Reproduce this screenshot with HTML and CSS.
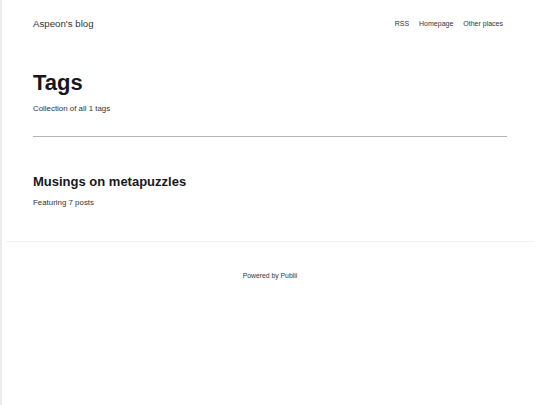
FILE: index.html
```html
<!DOCTYPE html>
<html lang="en">

<head>
    <meta charset="UTF-8">
    <meta name="viewport" content="width=device-width, initial-scale=1.0">
    <title>Tags - Aspeon's blog</title>
    <link rel="stylesheet" href="styles.css">
</head>

<body>
    <div class="page">
        <header class="top">
            <a class="logo" href="#">Aspeon's blog</a>
            <nav class="menu">
                <a href="#">RSS</a>
                <a href="#">Homepage</a>
                <a href="#">Other places</a>
            </nav>
        </header>

        <main class="content">
            <h1>Tags</h1>
            <p class="desc">Collection of all 1 tags</p>
            <hr>
            <article class="tag">
                <h2><a href="#">Musings on metapuzzles</a></h2>
                <p>Featuring 7 posts</p>
            </article>
        </main>

        <footer class="footer">
            <p>Powered by <a href="#">Publii</a></p>
        </footer>
    </div>
</body>

</html>
```

FILE: styles.css
```css
body {
    margin: 0;
    font-family: "Liberation Sans", Arial, sans-serif;
    color: #17181e;
    background: #fff;
}

a {
    color: inherit;
    text-decoration: none;
}

.page {
    min-height: 405px;
    border-left: 2px solid #ececec;
    padding-right: 6px;
    box-sizing: border-box;
}

.top {
    display: flex;
    justify-content: space-between;
    align-items: center;
    padding: 17px 31px 0 31px;
    height: 13px;
    color: #333;
}

.logo {
    font-size: 9.7px;
}

.menu {
    display: flex;
    gap: 10px;
    font-size: 7px;
}

.content {
    padding: 0 27px 0 31px;
}

h1 {
    font-size: 22px;
    margin: 40px 0 0;
    line-height: 26px;
}

.desc {
    font-size: 7.9px;
    margin: 8px 0 0;
    color: #333;
}

hr {
    border: none;
    border-top: 1.5px solid #b4b4b4;
    margin: 23px 0 0;
}

.tag h2 {
    font-size: 13px;
    margin: 37px 0 0;
    line-height: 16px;
}

.tag p {
    font-size: 7.9px;
    margin: 8px 0 0;
    color: #333;
}

.footer {
    margin: 34px 0 0 4px;
    border-top: 1px solid #f1f1f1;
    text-align: center;
    font-size: 6.8px;
    padding-top: 30px;
    color: #333;
}

.footer p {
    margin: 0;
}
```
